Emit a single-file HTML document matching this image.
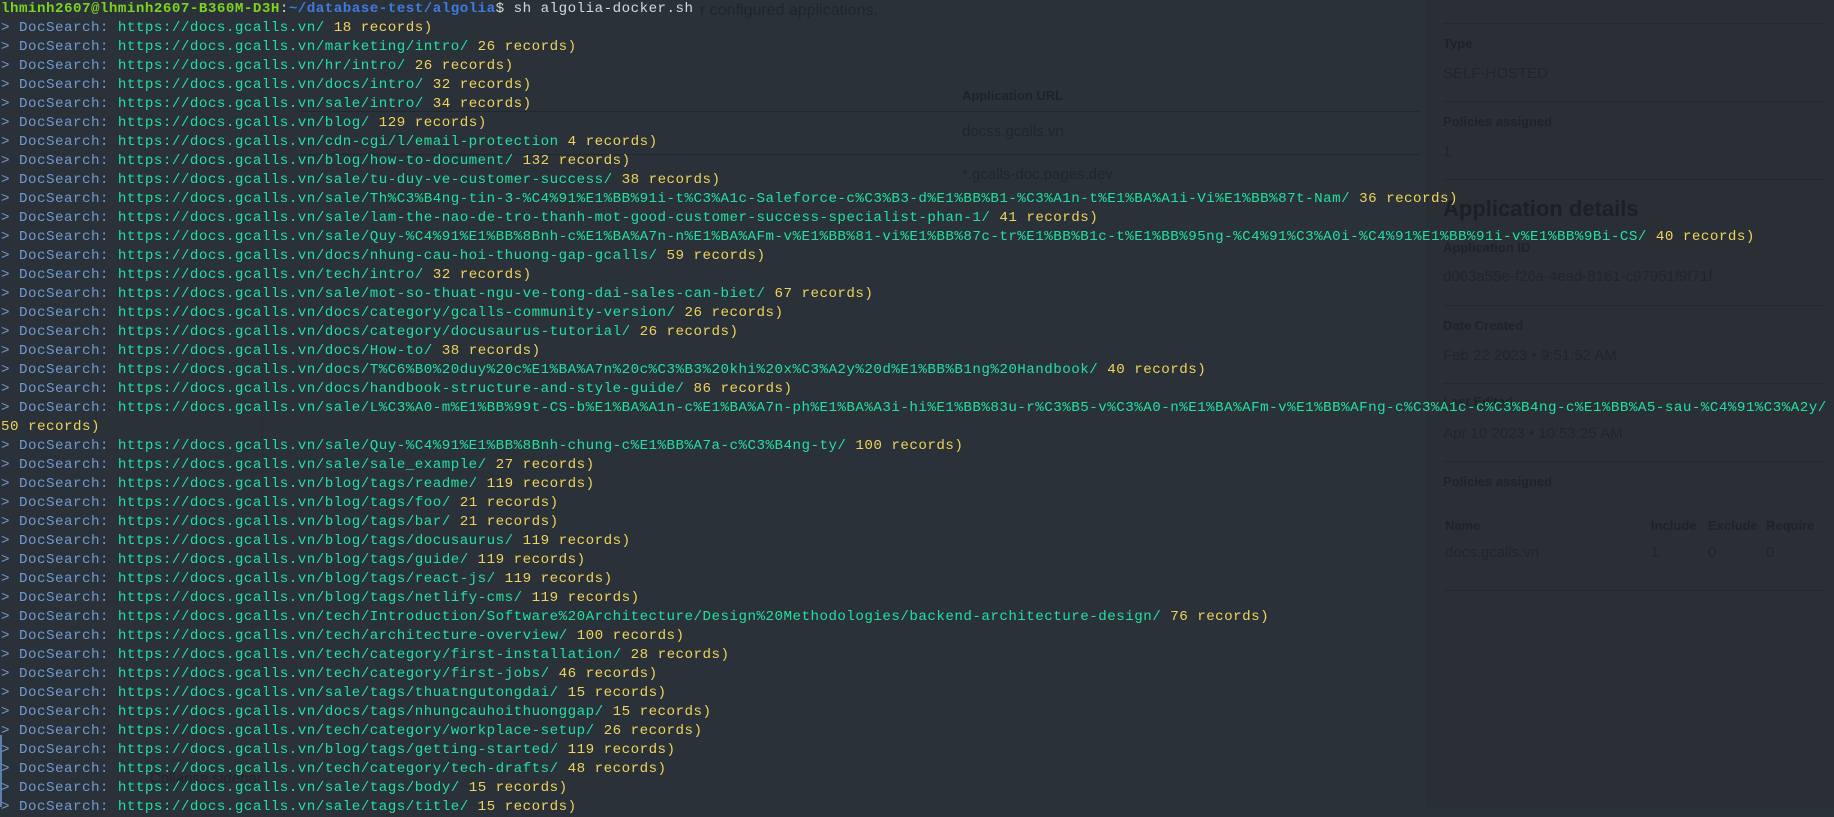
<!DOCTYPE html>
<html><head><meta charset="utf-8">
<style>
html,body{margin:0;padding:0;}
body{width:1834px;height:807px;overflow:hidden;background:#2b3138;position:relative;font-family:"Liberation Sans",sans-serif;}
.bg{position:absolute;color:#20252b;font-size:15px;white-space:nowrap;}
.lbl{font-weight:bold;font-size:13px;color:#1f2328;}
.hr{position:absolute;height:1px;background:#23282e;}
#panel{position:absolute;left:1427px;top:0;width:407px;height:807px;background:#2a2f36;border-left:1px solid #262b31;}
#term{position:absolute;left:0;top:0;margin:0;padding:0 0 0 1px;font-family:"Liberation Mono",monospace;font-size:14.2px;letter-spacing:0.48px;line-height:19px;white-space:pre;color:#d8d8d8;}
.p{color:#6e9bd0}.u{color:#22e0a3}.r{color:#eed45c}
.g{color:#7ed321;font-weight:bold}.b{color:#3d7be0;font-weight:bold}
</style></head><body>
<div class="bg" style="left:700px;top:2px;font-size:16px;">r configured applications.</div>
<div class="bg lbl" style="left:962px;top:88px;">Application URL</div>
<div class="hr" style="left:300px;top:111px;width:1120px;"></div>
<div class="bg" style="left:962px;top:123px;">docss.gcalls.vn</div>
<div class="hr" style="left:300px;top:154px;width:1120px;"></div>
<div class="bg" style="left:962px;top:166px;">*.gcalls-doc.pages.dev</div>
<div class="hr" style="left:262px;top:0;width:1px;height:807px;background:#282d33;"></div>
<div class="bg" style="left:150px;top:770px;">Collapse sidebar</div>
<div id="panel"></div>
<div class="hr" style="left:1443px;top:23px;width:380px;"></div>
<div class="bg lbl" style="left:1443px;top:36px;">Type</div>
<div class="bg" style="left:1443px;top:65px;">SELF-HOSTED</div>
<div class="hr" style="left:1443px;top:101px;width:380px;"></div>
<div class="bg lbl" style="left:1443px;top:114px;">Policies assigned</div>
<div class="bg" style="left:1443px;top:143px;">1</div>
<div class="hr" style="left:1443px;top:179px;width:380px;"></div>
<div class="bg" style="left:1443px;top:196px;font-size:22px;font-weight:bold;color:#1c2025;">Application details</div>
<div class="bg lbl" style="left:1443px;top:240px;">Application ID</div>
<div class="bg" style="left:1443px;top:268px;">d063a55e-f26a-4ead-8161-c97951f9f71f</div>
<div class="hr" style="left:1443px;top:305px;width:380px;"></div>
<div class="bg lbl" style="left:1443px;top:318px;">Date Created</div>
<div class="bg" style="left:1443px;top:347px;">Feb 22 2023 • 9:51:52 AM</div>
<div class="hr" style="left:1443px;top:383px;width:380px;"></div>
<div class="bg lbl" style="left:1443px;top:394px;">Last Edited</div>
<div class="bg" style="left:1443px;top:425px;">Apr 10 2023 • 10:53:25 AM</div>
<div class="hr" style="left:1443px;top:461px;width:380px;"></div>
<div class="bg lbl" style="left:1443px;top:474px;">Policies assigned</div>
<div class="bg lbl" style="left:1445px;top:518px;">Name</div>
<div class="bg lbl" style="left:1651px;top:518px;">Include</div>
<div class="bg lbl" style="left:1708px;top:518px;">Exclude</div>
<div class="bg lbl" style="left:1766px;top:518px;">Require</div>
<div class="bg" style="left:1445px;top:544px;">docs.gcalls.vn</div>
<div class="bg" style="left:1651px;top:544px;">1</div>
<div class="bg" style="left:1708px;top:544px;">0</div>
<div class="bg" style="left:1766px;top:544px;">0</div>
<div class="hr" style="left:1443px;top:590px;width:380px;"></div>
<div class="hr" style="left:0;top:735px;width:2px;height:72px;background:#5a7fb0;"></div>
<pre id="term"><span class="g">lhminh2607@lhminh2607-B360M-D3H</span>:<span class="b">~/database-test/algolia</span>$ sh algolia-docker.sh
<span class="p">&gt; DocSearch: </span><span class="u">https://docs.gcalls.vn/</span><span class="r"> 18 records)</span>
<span class="p">&gt; DocSearch: </span><span class="u">https://docs.gcalls.vn/marketing/intro/</span><span class="r"> 26 records)</span>
<span class="p">&gt; DocSearch: </span><span class="u">https://docs.gcalls.vn/hr/intro/</span><span class="r"> 26 records)</span>
<span class="p">&gt; DocSearch: </span><span class="u">https://docs.gcalls.vn/docs/intro/</span><span class="r"> 32 records)</span>
<span class="p">&gt; DocSearch: </span><span class="u">https://docs.gcalls.vn/sale/intro/</span><span class="r"> 34 records)</span>
<span class="p">&gt; DocSearch: </span><span class="u">https://docs.gcalls.vn/blog/</span><span class="r"> 129 records)</span>
<span class="p">&gt; DocSearch: </span><span class="u">https://docs.gcalls.vn/cdn-cgi/l/email-protection</span><span class="r"> 4 records)</span>
<span class="p">&gt; DocSearch: </span><span class="u">https://docs.gcalls.vn/blog/how-to-document/</span><span class="r"> 132 records)</span>
<span class="p">&gt; DocSearch: </span><span class="u">https://docs.gcalls.vn/sale/tu-duy-ve-customer-success/</span><span class="r"> 38 records)</span>
<span class="p">&gt; DocSearch: </span><span class="u">https://docs.gcalls.vn/sale/Th%C3%B4ng-tin-3-%C4%91%E1%BB%91i-t%C3%A1c-Saleforce-c%C3%B3-d%E1%BB%B1-%C3%A1n-t%E1%BA%A1i-Vi%E1%BB%87t-Nam/</span><span class="r"> 36 records)</span>
<span class="p">&gt; DocSearch: </span><span class="u">https://docs.gcalls.vn/sale/lam-the-nao-de-tro-thanh-mot-good-customer-success-specialist-phan-1/</span><span class="r"> 41 records)</span>
<span class="p">&gt; DocSearch: </span><span class="u">https://docs.gcalls.vn/sale/Quy-%C4%91%E1%BB%8Bnh-c%E1%BA%A7n-n%E1%BA%AFm-v%E1%BB%81-vi%E1%BB%87c-tr%E1%BB%B1c-t%E1%BB%95ng-%C4%91%C3%A0i-%C4%91%E1%BB%91i-v%E1%BB%9Bi-CS/</span><span class="r"> 40 records)</span>
<span class="p">&gt; DocSearch: </span><span class="u">https://docs.gcalls.vn/docs/nhung-cau-hoi-thuong-gap-gcalls/</span><span class="r"> 59 records)</span>
<span class="p">&gt; DocSearch: </span><span class="u">https://docs.gcalls.vn/tech/intro/</span><span class="r"> 32 records)</span>
<span class="p">&gt; DocSearch: </span><span class="u">https://docs.gcalls.vn/sale/mot-so-thuat-ngu-ve-tong-dai-sales-can-biet/</span><span class="r"> 67 records)</span>
<span class="p">&gt; DocSearch: </span><span class="u">https://docs.gcalls.vn/docs/category/gcalls-community-version/</span><span class="r"> 26 records)</span>
<span class="p">&gt; DocSearch: </span><span class="u">https://docs.gcalls.vn/docs/category/docusaurus-tutorial/</span><span class="r"> 26 records)</span>
<span class="p">&gt; DocSearch: </span><span class="u">https://docs.gcalls.vn/docs/How-to/</span><span class="r"> 38 records)</span>
<span class="p">&gt; DocSearch: </span><span class="u">https://docs.gcalls.vn/docs/T%C6%B0%20duy%20c%E1%BA%A7n%20c%C3%B3%20khi%20x%C3%A2y%20d%E1%BB%B1ng%20Handbook/</span><span class="r"> 40 records)</span>
<span class="p">&gt; DocSearch: </span><span class="u">https://docs.gcalls.vn/docs/handbook-structure-and-style-guide/</span><span class="r"> 86 records)</span>
<span class="p">&gt; DocSearch: </span><span class="u">https://docs.gcalls.vn/sale/L%C3%A0-m%E1%BB%99t-CS-b%E1%BA%A1n-c%E1%BA%A7n-ph%E1%BA%A3i-hi%E1%BB%83u-r%C3%B5-v%C3%A0-n%E1%BA%AFm-v%E1%BB%AFng-c%C3%A1c-c%C3%B4ng-c%E1%BB%A5-sau-%C4%91%C3%A2y/</span>
<span class="r">50 records)</span>
<span class="p">&gt; DocSearch: </span><span class="u">https://docs.gcalls.vn/sale/Quy-%C4%91%E1%BB%8Bnh-chung-c%E1%BB%A7a-c%C3%B4ng-ty/</span><span class="r"> 100 records)</span>
<span class="p">&gt; DocSearch: </span><span class="u">https://docs.gcalls.vn/sale/sale_example/</span><span class="r"> 27 records)</span>
<span class="p">&gt; DocSearch: </span><span class="u">https://docs.gcalls.vn/blog/tags/readme/</span><span class="r"> 119 records)</span>
<span class="p">&gt; DocSearch: </span><span class="u">https://docs.gcalls.vn/blog/tags/foo/</span><span class="r"> 21 records)</span>
<span class="p">&gt; DocSearch: </span><span class="u">https://docs.gcalls.vn/blog/tags/bar/</span><span class="r"> 21 records)</span>
<span class="p">&gt; DocSearch: </span><span class="u">https://docs.gcalls.vn/blog/tags/docusaurus/</span><span class="r"> 119 records)</span>
<span class="p">&gt; DocSearch: </span><span class="u">https://docs.gcalls.vn/blog/tags/guide/</span><span class="r"> 119 records)</span>
<span class="p">&gt; DocSearch: </span><span class="u">https://docs.gcalls.vn/blog/tags/react-js/</span><span class="r"> 119 records)</span>
<span class="p">&gt; DocSearch: </span><span class="u">https://docs.gcalls.vn/blog/tags/netlify-cms/</span><span class="r"> 119 records)</span>
<span class="p">&gt; DocSearch: </span><span class="u">https://docs.gcalls.vn/tech/Introduction/Software%20Architecture/Design%20Methodologies/backend-architecture-design/</span><span class="r"> 76 records)</span>
<span class="p">&gt; DocSearch: </span><span class="u">https://docs.gcalls.vn/tech/architecture-overview/</span><span class="r"> 100 records)</span>
<span class="p">&gt; DocSearch: </span><span class="u">https://docs.gcalls.vn/tech/category/first-installation/</span><span class="r"> 28 records)</span>
<span class="p">&gt; DocSearch: </span><span class="u">https://docs.gcalls.vn/tech/category/first-jobs/</span><span class="r"> 46 records)</span>
<span class="p">&gt; DocSearch: </span><span class="u">https://docs.gcalls.vn/sale/tags/thuatngutongdai/</span><span class="r"> 15 records)</span>
<span class="p">&gt; DocSearch: </span><span class="u">https://docs.gcalls.vn/docs/tags/nhungcauhoithuonggap/</span><span class="r"> 15 records)</span>
<span class="p">&gt; DocSearch: </span><span class="u">https://docs.gcalls.vn/tech/category/workplace-setup/</span><span class="r"> 26 records)</span>
<span class="p">&gt; DocSearch: </span><span class="u">https://docs.gcalls.vn/blog/tags/getting-started/</span><span class="r"> 119 records)</span>
<span class="p">&gt; DocSearch: </span><span class="u">https://docs.gcalls.vn/tech/category/tech-drafts/</span><span class="r"> 48 records)</span>
<span class="p">&gt; DocSearch: </span><span class="u">https://docs.gcalls.vn/sale/tags/body/</span><span class="r"> 15 records)</span>
<span class="p">&gt; DocSearch: </span><span class="u">https://docs.gcalls.vn/sale/tags/title/</span><span class="r"> 15 records)</span></pre>
</body></html>
